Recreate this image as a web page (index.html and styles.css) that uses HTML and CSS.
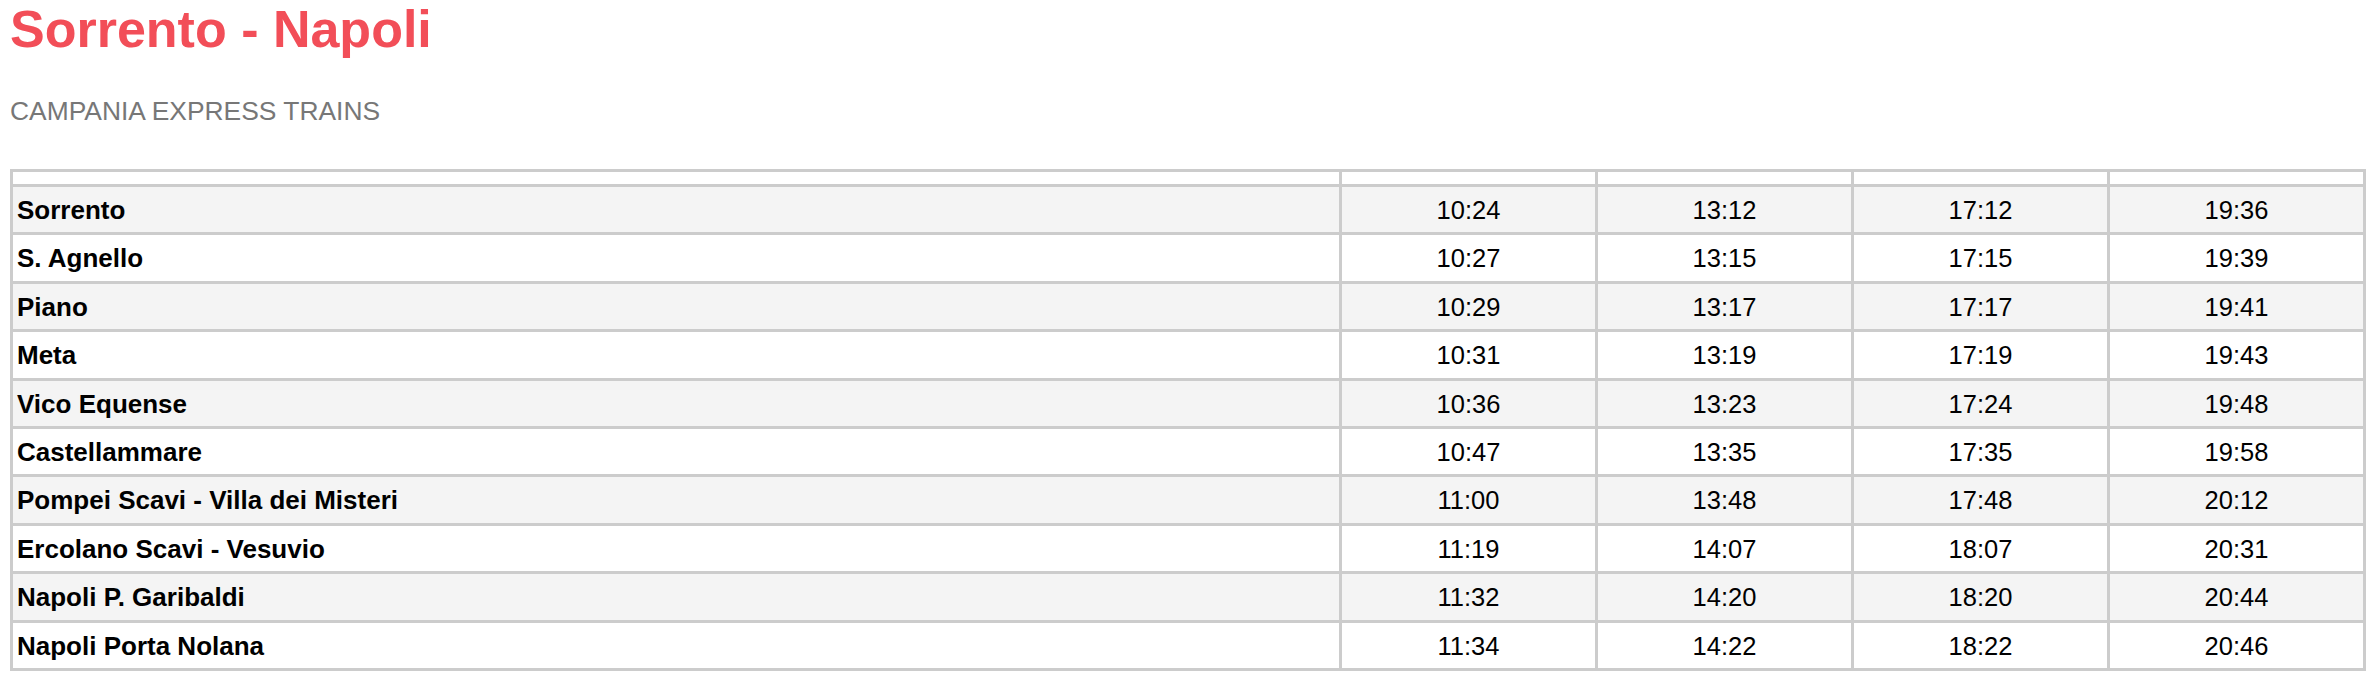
FILE: index.html
```html
<!DOCTYPE html>
<html lang="it">
<head>
<meta charset="utf-8">
<title>Sorrento - Napoli</title>
<link rel="stylesheet" href="styles.css">
</head>
<body>
<h1 class="title">Sorrento - Napoli</h1>
<p class="subtitle">CAMPANIA EXPRESS TRAINS</p>
<table class="timetable">
  <colgroup>
    <col class="col-station">
    <col class="col-time">
    <col class="col-time">
    <col class="col-time">
    <col class="col-time">
  </colgroup>
  <thead>
    <tr><th></th><th></th><th></th><th></th><th></th></tr>
  </thead>
  <tbody>
    <tr><td class="station">Sorrento</td><td>10:24</td><td>13:12</td><td>17:12</td><td>19:36</td></tr>
    <tr><td class="station">S. Agnello</td><td>10:27</td><td>13:15</td><td>17:15</td><td>19:39</td></tr>
    <tr><td class="station">Piano</td><td>10:29</td><td>13:17</td><td>17:17</td><td>19:41</td></tr>
    <tr><td class="station">Meta</td><td>10:31</td><td>13:19</td><td>17:19</td><td>19:43</td></tr>
    <tr><td class="station">Vico Equense</td><td>10:36</td><td>13:23</td><td>17:24</td><td>19:48</td></tr>
    <tr><td class="station">Castellammare</td><td>10:47</td><td>13:35</td><td>17:35</td><td>19:58</td></tr>
    <tr><td class="station">Pompei Scavi - Villa dei Misteri</td><td>11:00</td><td>13:48</td><td>17:48</td><td>20:12</td></tr>
    <tr><td class="station">Ercolano Scavi - Vesuvio</td><td>11:19</td><td>14:07</td><td>18:07</td><td>20:31</td></tr>
    <tr><td class="station">Napoli P. Garibaldi</td><td>11:32</td><td>14:20</td><td>18:20</td><td>20:44</td></tr>
    <tr><td class="station">Napoli Porta Nolana</td><td>11:34</td><td>14:22</td><td>18:22</td><td>20:46</td></tr>
  </tbody>
</table>
</body>
</html>
```
FILE: styles.css
```css
html, body {
  background: #ffffff;
}
body {
  margin: 0 14px 0 10px;
  font-family: "Liberation Sans", Arial, sans-serif;
  color: #000;
}
.title {
  margin: 0;
  font-size: 52px;
  line-height: 58px;
  font-weight: bold;
  color: #f24e58;
}
.subtitle {
  margin: 38px 0 0 0;
  font-size: 26.4px;
  line-height: 30px;
  color: #777777;
}
.timetable {
  margin-top: 43px;
  width: 100%;
  border-collapse: collapse;
  border: 3px solid #cccccc;
}
.col-time {
  width: 256px;
}
.timetable th {
  padding: 6px 0;
  border: 3px solid #cccccc;
  background: #ffffff;
}
.timetable td {
  border: 3px solid #cccccc;
  padding: 9px 4px 7px 4px;
  font-size: 25.5px;
  line-height: 29.4px;
  text-align: center;
}
.timetable td.station {
  text-align: left;
  font-weight: bold;
  font-size: 26px;
}
.timetable tbody tr:nth-child(odd) td {
  background: #f4f4f4;
}
.timetable tbody tr:nth-child(even) td {
  background: #ffffff;
}
```
